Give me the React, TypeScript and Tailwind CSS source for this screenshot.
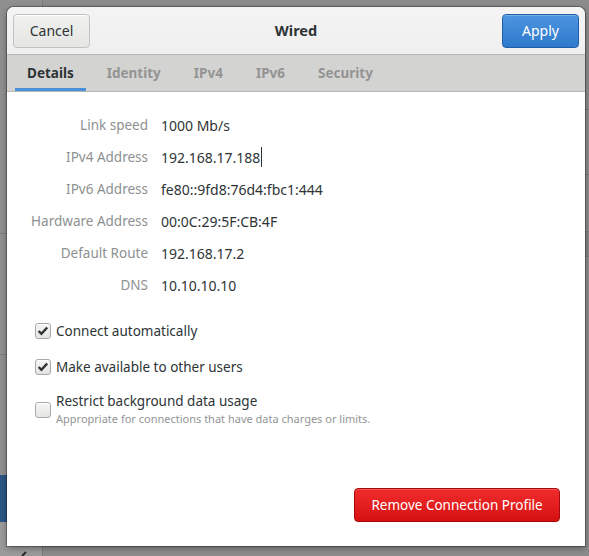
const details: [string, string][] = [
  ['Link speed', '1000 Mb/s'],
  ['IPv4 Address', '192.168.17.188'],
  ['IPv6 Address', 'fe80::9fd8:76d4:fbc1:444'],
  ['Hardware Address', '00:0C:29:5F:CB:4F'],
  ['Default Route', '192.168.17.2'],
  ['DNS', '10.10.10.10'],
];

const tabs = ['Details', 'Identity', 'IPv4', 'IPv6', 'Security'];

function Check({ checked }: { checked: boolean }) {
  return (
    <span className="flex h-[16px] w-[16px] shrink-0 items-center justify-center rounded-[3px] border border-[#a9a9a6] bg-gradient-to-b from-[#f6f6f6] to-[#e4e4e2] shadow-[inset_0_1px_0_#fff]">
      {checked && (
        <svg viewBox="0 0 16 16" className="h-[14px] w-[14px]">
          <path d="M3 8l3.2 3.2 6.6-7.2" fill="none" stroke="#2e3436" strokeWidth={2.8} strokeLinecap="butt" strokeLinejoin="miter" />
        </svg>
      )}
    </span>
  );
}

export default function App() {
  return (
    <div className="relative h-[556px] w-[589px] overflow-hidden bg-[#8a8a8a] font-['Noto_Sans',sans-serif] text-[#2e3436]">
      {/* dimmed window behind the dialog */}
      <div className="flex h-full">
        <div className="flex w-[43px] flex-col border-r border-[#7c7c7c] bg-[#8f8f8f]">
          <div className="h-[234px] border-b border-[#7a7a7a]" />
          <div className="h-[121px] border-b border-[#7a7a7a]" />
          <div className="h-[120px]" />
          <div className="h-[47px] bg-[#2b5583]" />
          <div className="flex flex-1 items-end bg-[#9a9a9a] pl-[19px]">
            <svg viewBox="0 0 10 12" className="h-[12px] w-[10px]">
              <path d="M3 12l4-4" fill="none" stroke="#2b2b2b" strokeWidth={2} />
            </svg>
          </div>
        </div>
        <div className="flex flex-1 flex-col bg-[#8b8b8b]">
          <div className="h-[110px] border-b border-[#797979]" />
          <div className="h-[65px] border-b border-[#797979]" />
          <div className="h-[57px] border-b border-[#797979]" />
          <div className="h-[25px] border-b border-[#797979] bg-[#838383]" />
          <div className="flex-1" />
        </div>
      </div>

      {/* dialog */}
      <div className="absolute left-[7px] top-[7px] flex h-[539px] w-[578px] flex-col overflow-hidden rounded-t-[7px] bg-white shadow-[0_0_0_1px_rgba(0,0,0,0.28),0_2px_6px_rgba(0,0,0,0.35)]">
        <div className="flex h-[48px] items-center justify-between border-b border-[#b8b8b5] bg-gradient-to-b from-[#f4f4f4] to-[#efefef] px-[6px]">
          <button className="h-[34px] w-[77px] rounded-[4px] border border-[#c1c1bd] bg-gradient-to-b from-[#f0f0ef] to-[#e6e6e4] text-[14px] text-[#2e3436] shadow-[inset_0_1px_0_#fff]">
            Cancel
          </button>
          <span className="text-[14.5px] font-bold text-[#2e3436]">Wired</span>
          <button className="h-[34px] w-[77px] rounded-[4px] border border-[#1c5fa8] bg-gradient-to-b from-[#4d95e0] to-[#2e79cc] text-[14px] text-white shadow-[inset_0_1px_0_rgba(255,255,255,0.25)]">
            Apply
          </button>
        </div>

        <div className="flex h-[37px] gap-[9px] border-b border-[#b6b6b3] bg-[#d3d3d2] px-[8px]">
          {tabs.map((t, i) => (
            <div
              key={t}
              className={
                i === 0
                  ? 'flex items-center border-b-[3px] border-[#4a90d9] px-[12px] pt-[3px] text-[13.5px] font-bold text-[#2e3436]'
                  : 'flex items-center border-b-[3px] border-transparent px-[12px] pt-[3px] text-[13.5px] font-bold text-[#939393]'
              }
            >
              {t}
            </div>
          ))}
        </div>

        <div className="grid grid-cols-[141px_1fr] gap-x-[13px] pt-[17px] text-[14px]">
          {details.map(([label, value], i) => (
            <div key={label} className="contents">
              <div className="flex h-[32px] items-center justify-end text-[13.5px] text-[#8d9191]">{label}</div>
              <div className="flex h-[32px] items-center text-[#2e3436]">
                {value}
                {i === 1 && <span className="ml-[1px] inline-block h-[20px] w-[1px] bg-[#2e3436]" />}
              </div>
            </div>
          ))}
        </div>

        <div className="flex flex-col pl-[28px] pt-[12px] text-[13.5px]">
          <label className="flex h-[36px] items-center gap-[5px]">
            <Check checked />
            <span>Connect automatically</span>
          </label>
          <label className="flex h-[36px] items-center gap-[5px]">
            <Check checked />
            <span>Make available to other users</span>
          </label>
          <label className="mt-[7px] flex items-center gap-[5px]">
            <Check checked={false} />
            <span className="flex flex-col">
              <span className="leading-[18px]">Restrict background data usage</span>
              <span className="text-[11px] leading-[17px] text-[#929595]">
                Appropriate for connections that have data charges or limits.
              </span>
            </span>
          </label>
        </div>

        <div className="flex-1" />
        <div className="flex justify-end pb-[24px] pr-[25px]">
          <button className="h-[34px] w-[206px] rounded-[4px] border border-[#a60a0a] bg-gradient-to-b from-[#f12b2b] to-[#d51010] text-[13.5px] text-white shadow-[inset_0_1px_0_rgba(255,255,255,0.2)]">
            Remove Connection Profile
          </button>
        </div>
      </div>
    </div>
  );
}
